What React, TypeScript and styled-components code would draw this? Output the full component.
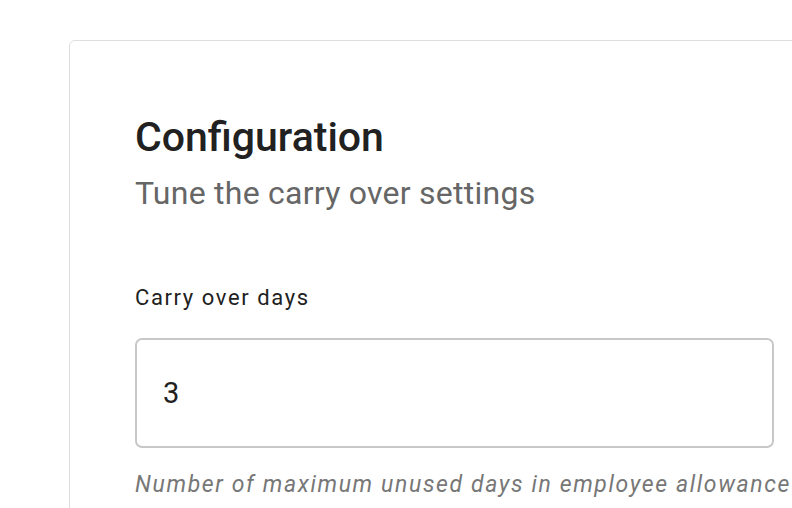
import React from "react";
import styled, { createGlobalStyle } from "styled-components";

const GlobalStyle = createGlobalStyle`
  html, body {
    margin: 0;
    background: #ffffff;
    overflow: hidden;
  }
  body {
    font-family: Roboto, "Liberation Sans", sans-serif;
  }
`;

const Page = styled.div`
  padding: 40px 0 0 69px;
  width: 792px;
  height: 508px;
  box-sizing: border-box;
  overflow: hidden;
`;

const Card = styled.section`
  width: 800px;
  height: 520px;
  box-sizing: border-box;
  border: 1px solid #dedede;
  border-radius: 6px;
  padding: 72px 0 0 65px;
`;

const Title = styled.h2`
  margin: 0;
  font-size: 41px;
  line-height: 48px;
  font-weight: 500;
  color: #212121;
`;

const Subtitle = styled.p`
  margin: 13px 0 0;
  font-size: 32px;
  line-height: 38px;
  font-weight: 400;
  color: #666666;
  letter-spacing: 0.25px;
`;

const Field = styled.div`
  margin-top: 73px;
  display: flex;
  flex-direction: column;
  width: 639px;
`;

const Label = styled.label`
  font-size: 22px;
  line-height: 26px;
  color: #212121;
  letter-spacing: 1.6px;
`;

const Input = styled.input`
  margin-top: 27px;
  height: 110px;
  box-sizing: border-box;
  border: 2px solid #c8c8c8;
  border-radius: 7px;
  padding: 0 26px;
  font-family: Roboto, "Liberation Sans", sans-serif;
  font-size: 29px;
  color: #212121;
  outline: none;
  background: #fff;
`;

const Helper = styled.p`
  margin: 23px 0 0;
  width: 700px;
  font-size: 23px;
  line-height: 28px;
  font-style: italic;
  color: #777777;
  letter-spacing: 1.63px;
  white-space: nowrap;
`;

export default function App() {
  return (
    <>
      <GlobalStyle />
      <Page>
        <Card>
          <Title>Configuration</Title>
          <Subtitle>Tune the carry over settings</Subtitle>
          <Field>
            <Label htmlFor="carry">Carry over days</Label>
            <Input id="carry" defaultValue="3" readOnly />
            <Helper>Number of maximum unused days in employee allowance</Helper>
          </Field>
        </Card>
      </Page>
    </>
  );
}
